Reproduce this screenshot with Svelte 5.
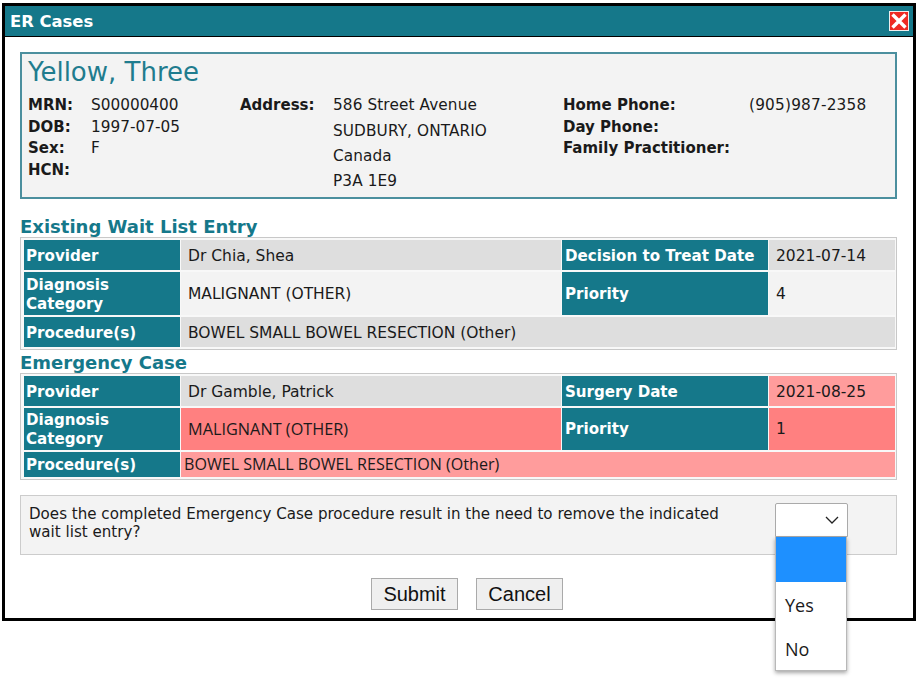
<script>
	const patient = [
		['MRN:', 'S00000400'],
		['DOB:', '1997-07-05'],
		['Sex:', 'F'],
		['HCN:', '']
	];
	const address = ['586 Street Avenue', 'SUDBURY, ONTARIO', 'Canada', 'P3A 1E9'];
	const contact = [
		['Home Phone:', '(905)987-2358'],
		['Day Phone:', ''],
		['Family Practitioner:', '']
	];
</script>

<div class="page">
	<div class="dialog">
		<div class="titlebar">
			<span>ER Cases</span>
			<button class="close" aria-label="Close">
				<svg viewBox="0 0 20 20" width="20" height="20">
					<rect x="0.5" y="0.5" width="19" height="19" fill="#ee2b24" stroke="#eeeeee" />
					<path d="M3.5 3.5l13 13M16.5 3.5l-13 13" stroke="#fff" stroke-width="3.4" />
				</svg>
			</button>
		</div>

		<div class="content">
			<section class="patient">
				<h1>Yellow, Three</h1>
				<div class="columns">
					<div class="col-id">
						{#each patient as [k, v]}
							<div class="kv"><b>{k}</b><span>{v}</span></div>
						{/each}
					</div>
					<div class="col-address">
						<b>Address:</b>
						<div class="lines">
							{#each address as line}
								<div>{line}</div>
							{/each}
						</div>
					</div>
					<div class="col-contact">
						{#each contact as [k, v]}
							<div class="kv"><b>{k}</b><span>{v}</span></div>
						{/each}
					</div>
				</div>
			</section>

			<h2 class="first">Existing Wait List Entry</h2>
			<table>
				<colgroup><col class="c1" /><col class="c2" /><col class="c3" /><col class="c4" /></colgroup>
				<tbody>
					<tr class="r1">
						<th>Provider</th><td class="grey">Dr Chia, Shea</td>
						<th>Decision to Treat Date</th><td class="grey">2021-07-14</td>
					</tr>
					<tr class="r2">
						<th>Diagnosis Category</th><td class="light">MALIGNANT (OTHER)</td>
						<th>Priority</th><td class="light">4</td>
					</tr>
					<tr class="r3">
						<th>Procedure(s)</th><td class="grey" colspan="3">BOWEL SMALL BOWEL RESECTION (Other)</td>
					</tr>
				</tbody>
			</table>

			<h2>Emergency Case</h2>
			<table>
				<colgroup><col class="c1" /><col class="c2" /><col class="c3" /><col class="c4" /></colgroup>
				<tbody>
					<tr class="r1">
						<th>Provider</th><td class="grey">Dr Gamble, Patrick</td>
						<th>Surgery Date</th><td class="pink">2021-08-25</td>
					</tr>
					<tr class="r2b">
						<th>Diagnosis Category</th><td class="red alt">MALIGNANT (OTHER)</td>
						<th>Priority</th><td class="red">1</td>
					</tr>
					<tr class="r3b">
						<th>Procedure(s)</th><td class="pink alt tight" colspan="3">BOWEL SMALL BOWEL RESECTION (Other)</td>
					</tr>
				</tbody>
			</table>

			<div class="question">
				<p>Does the completed Emergency Case procedure result in the need to remove the indicated wait list entry?</p>
				<div class="select">
					<svg viewBox="0 0 14 8" width="14" height="8">
						<path d="M1 1l6 6 6-6" fill="none" stroke="#222" stroke-width="1.3" />
					</svg>
					<ul class="options">
						<li class="active"></li>
						<li>Yes</li>
						<li>No</li>
					</ul>
				</div>
			</div>

			<div class="actions">
				<button>Submit</button>
				<button>Cancel</button>
			</div>
		</div>
	</div>
</div>

<style>
	:global(body) {
		background: #fff;
	}

	.page {
		height: 681px;
		padding: 3px 0 0 2px;
		box-sizing: border-box;
		overflow: hidden;
	}

	.dialog {
		width: 908px;
		height: 612px;
		border: 3px solid #000;
		background: #fff;
		color: #1a1a1a;
		font-family: 'DejaVu Sans', Verdana, sans-serif;
		font-size: 15.3px;
	}

	.titlebar {
		height: 30px;
		display: flex;
		align-items: center;
		justify-content: space-between;
		padding: 0 4px 0 5px;
		background: #15788a;
		border-bottom: 1px solid #000;
		color: #fff;
		font-weight: 700;
		font-size: 16.4px;
	}

	.close {
		display: block;
		padding: 0;
		border: 0;
		background: none;
		height: 20px;
	}

	.content {
		padding: 15px 16px 0 15px;
	}

	.patient {
		height: 143px;
		background: #f3f3f3;
		border: 2px solid #4b8f9e;
		padding: 0 6px;
	}

	h1 {
		margin: 0;
		padding-top: 2px;
		font-size: 26px;
		font-weight: 400;
		line-height: 32px;
		color: #1f7c8e;
	}

	.columns {
		display: flex;
		margin-top: 7px;
	}

	.col-id {
		width: 212px;
	}

	.col-address {
		width: 323px;
		display: flex;
	}

	.col-address b {
		width: 93px;
		line-height: 21.7px;
		font-size: 15px;
	}

	.lines {
		margin-top: -2px;
		letter-spacing: 0.1px;
	}

	.lines div {
		line-height: 25px;
	}

	.lines div:first-child {
		margin-bottom: 1px;
	}

	.kv {
		display: flex;
		line-height: 21.7px;
	}

	.kv b {
		font-size: 15px;
	}

	.col-contact .kv span {
		letter-spacing: 0.2px;
	}

	.col-id .kv b {
		width: 63px;
	}

	.col-contact .kv b {
		width: 186px;
	}

	h2 {
		margin: 0;
		padding-top: 2px;
		font-size: 18px;
		font-weight: 700;
		line-height: 21px;
		color: #15788a;
	}

	h2.first {
		margin-top: 15px;
	}

	table {
		width: 877px;
		table-layout: fixed;
		border-collapse: separate;
		border-spacing: 1px 2px;
		border: 1px solid #c8c8c8;
		padding-left: 2px;
		background: #f8f8f8;
	}

	.c1 { width: 156px; }
	.c2 { width: 380px; }
	.c3 { width: 206px; }

	th,
	td {
		padding: 2px 3px 0;
		text-align: left;
		vertical-align: middle;
		line-height: 19px;
		font-size: 15.5px;
	}

	td {
		padding-left: 7px;
	}

	th {
		padding-left: 2px;
		background: #15788a;
		color: #fff;
		font-weight: 700;
		font-size: 15.1px;
	}

	th:nth-child(3) {
		padding-left: 3px;
	}

	.r1 { height: 30px; }
	.r2 { height: 43px; }
	.r3 { height: 30px; }
	.r2b { height: 42px; }
	.r3b { height: 25px; }

	.r2b th,
	.r2b td {
		padding-top: 1px;
	}

	.grey { background: #dedede; }
	.light { background: #f3f3f3; }
	.pink { background: #ff9c9c; }
	.red { background: #ff8080; }

	.r2b .alt,
	.alt {
		font-family: 'Open Sans', 'Noto Sans', sans-serif;
		font-size: 16.3px;
		padding-top: 0;
	}

	.tight {
		padding-left: 3px;
		font-size: 16.1px;
	}

	.question {
		position: relative;
		margin-top: 15px;
		height: 60px;
		display: flex;
		box-sizing: border-box;
		border: 1px solid #ccc;
		background: #f3f3f3;
		padding: 9px 8px;
		font-size: 15.1px;
	}

	.question p {
		margin: 0;
		width: 700px;
		line-height: 18px;
	}

	.select {
		position: absolute;
		left: 754px;
		top: 7px;
		width: 73px;
		height: 34px;
		box-sizing: border-box;
		border: 1px solid #aaa;
		border-radius: 2px 2px 0 0;
		background: #fff;
	}

	.select svg {
		position: absolute;
		left: 49px;
		top: 12px;
	}

	.options {
		position: absolute;
		left: -1px;
		top: 33px;
		width: 72px;
		margin: 0;
		padding: 0;
		list-style: none;
		background: #fff;
		border: 1px solid #b8b8b8;
		border-top: 0;
		box-sizing: border-box;
		box-shadow: 0 2px 4px rgba(0, 0, 0, 0.35);
		font-family: 'Open Sans', 'Noto Sans', sans-serif;
		font-size: 18px;
	}

	.options li {
		height: 44px;
		line-height: 46px;
		padding-left: 9px;
	}

	.options li.active {
		height: 45px;
		background: #1e90ff;
	}

	.actions {
		display: flex;
		justify-content: center;
		gap: 18px;
		margin-top: 23px;
		padding-left: 17px;
	}

	.actions button {
		width: 87px;
		height: 32px;
		padding: 0;
		border: 1px solid #aaa;
		background: #efefef;
		color: #111;
		font-family: 'Liberation Sans', Arial, sans-serif;
		font-size: 20px;
	}
</style>
